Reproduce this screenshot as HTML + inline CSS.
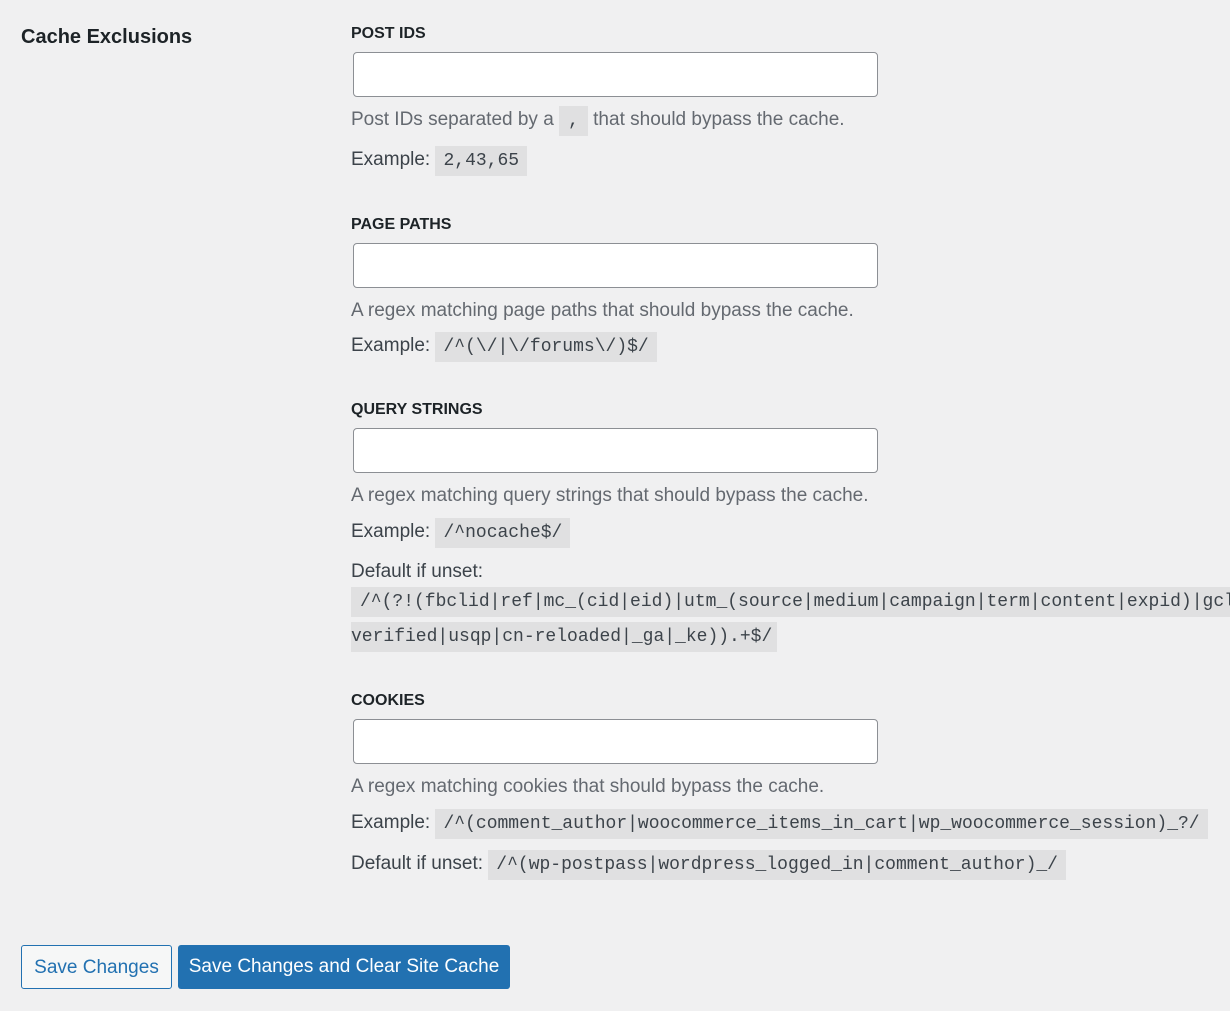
<!DOCTYPE html>
<html><head><meta charset="utf-8"><style>
html,body{margin:0;padding:0;width:1230px;height:1011px;overflow:hidden;background:#f0f0f1;font-family:"Liberation Sans",sans-serif;color:#3c434a}
.a{position:absolute;white-space:nowrap}
h2{position:absolute;left:21px;top:24px;margin:0;font-size:20px;font-weight:bold;color:#1d2327;line-height:26px}
.lbl{font-size:16px;font-weight:bold;color:#1d2327;line-height:20px;left:351px}
.inp{position:absolute;left:353px;width:523px;height:43px;background:#fff;border:1px solid #8c8f94;border-radius:4px}
.d{font-size:19px;color:#646970;line-height:26px;left:351px}
.e{font-size:19px;color:#3c434a;line-height:26px;left:351px}
code{font-family:"Liberation Mono",monospace;font-size:18px;background:#e0e0e1;color:#3c434a;padding:5px 8px}
.bt{position:absolute;top:945px;height:44px;border-radius:3px;font-size:19px;line-height:44px;text-align:center;box-sizing:border-box}
</style></head><body>
<h2>Cache Exclusions</h2>

<div class="a lbl" style="top:24px">POST IDS</div>
<div class="inp" style="top:52px"></div>
<div class="a d" style="top:107px">Post IDs separated by a <code style="padding:5px 9px">,</code> that should bypass the cache.</div>
<div class="a e" style="top:147px">Example: <code>2,43,65</code></div>

<div class="a lbl" style="top:215px">PAGE PATHS</div>
<div class="inp" style="top:243px"></div>
<div class="a d" style="top:298px">A regex matching page paths that should bypass the cache.</div>
<div class="a e" style="top:333px">Example: <code>/^(\/|\/forums\/)$/</code></div>

<div class="a lbl" style="top:400px">QUERY STRINGS</div>
<div class="inp" style="top:428px"></div>
<div class="a d" style="top:483px">A regex matching query strings that should bypass the cache.</div>
<div class="a e" style="top:519px">Example: <code>/^nocache$/</code></div>
<div class="a e" style="top:559px">Default if unset:</div>
<div class="a" style="left:351px;top:587px;width:879px;height:30px;background:#e0e0e1"></div>
<div class="a" style="left:360px;top:589px;font-family:'Liberation Mono',monospace;font-size:18px;line-height:26px">/^(?!(fbclid|ref|mc_(cid|eid)|utm_(source|medium|campaign|term|content|expid)|gclid</div>
<div class="a" style="left:351px;top:622px;width:426px;height:30px;background:#e0e0e1"></div>
<div class="a" style="left:351px;top:624px;font-family:'Liberation Mono',monospace;font-size:18px;line-height:26px">verified|usqp|cn-reloaded|_ga|_ke)).+$/</div>

<div class="a lbl" style="top:691px">COOKIES</div>
<div class="inp" style="top:719px"></div>
<div class="a d" style="top:774px">A regex matching cookies that should bypass the cache.</div>
<div class="a e" style="top:810px">Example: <code>/^(comment_author|woocommerce_items_in_cart|wp_woocommerce_session)_?/</code></div>
<div class="a e" style="top:851px">Default if unset: <code>/^(wp-postpass|wordpress_logged_in|comment_author)_/</code></div>

<div class="bt" style="left:21px;width:151px;border:1px solid #2271b1;background:#f6f7f7;color:#2271b1">Save Changes</div>
<div class="bt" style="left:178px;width:332px;background:#2271b1;color:#fff">Save Changes and Clear Site Cache</div>
</body></html>
